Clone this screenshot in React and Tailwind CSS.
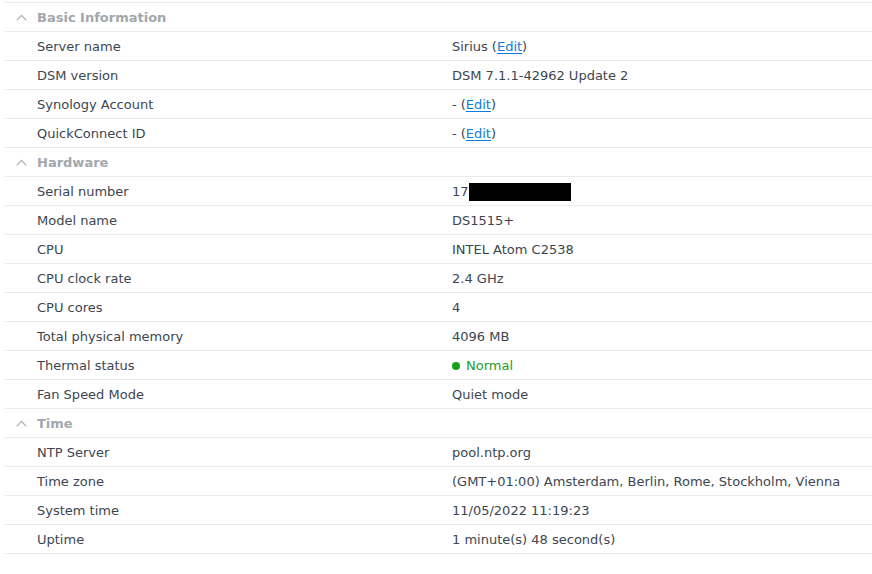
const sections = [
  {
    title: "Basic Information",
    rows: [
      { label: "Server name", value: "Sirius", edit: true },
      { label: "DSM version", value: "DSM 7.1.1-42962 Update 2" },
      { label: "Synology Account", value: "-", edit: true },
      { label: "QuickConnect ID", value: "-", edit: true },
    ],
  },
  {
    title: "Hardware",
    rows: [
      { label: "Serial number", value: "17", redacted: true },
      { label: "Model name", value: "DS1515+" },
      { label: "CPU", value: "INTEL Atom C2538" },
      { label: "CPU clock rate", value: "2.4 GHz" },
      { label: "CPU cores", value: "4" },
      { label: "Total physical memory", value: "4096 MB" },
      { label: "Thermal status", value: "Normal", status: true },
      { label: "Fan Speed Mode", value: "Quiet mode" },
    ],
  },
  {
    title: "Time",
    rows: [
      { label: "NTP Server", value: "pool.ntp.org" },
      { label: "Time zone", value: "(GMT+01:00) Amsterdam, Berlin, Rome, Stockholm, Vienna" },
      { label: "System time", value: "11/05/2022 11:19:23" },
      { label: "Uptime", value: "1 minute(s) 48 second(s)" },
    ],
  },
];

function Value({ row }) {
  if (row.status) {
    return (
      <span className="flex items-center gap-[6px] text-[#1ba01b]">
        <span className="w-[8px] h-[8px] rounded-full bg-[#16a016]" />
        {row.value}
      </span>
    );
  }
  return (
    <span className="flex items-center">
      {row.value}
      {row.redacted && <span className="inline-block w-[102px] h-[18px] bg-black" />}
      {row.edit && (
        <span className="ml-[4px]">
          (<a className="text-[#0b7de0] underline underline-offset-2 cursor-pointer">Edit</a>)
        </span>
      )}
    </span>
  );
}

export default function App() {
  return (
    <div
      className="w-[872px] h-[574px] bg-white pt-[2px] pl-[5px] text-[13px] text-[#3c4651]"
      style={{ fontFamily: '"DejaVu Sans", Verdana, sans-serif' }}
    >
      <div className="border-t border-[#e6ebf0]">
        {sections.map((s) => (
          <div key={s.title}>
            <div className="h-[29px] pt-[1px] flex items-center border-b border-[#e6ebf0] text-[#a2a7ad] font-bold">
              <svg width="11" height="7" viewBox="0 0 11 7" className="ml-[11px] mr-[10px]" fill="none">
                <polyline points="0.7,6.3 5.5,1.3 10.3,6.3" stroke="#a9adb2" strokeWidth="1.2" />
              </svg>
              {s.title}
            </div>
            {s.rows.map((r) => (
              <div key={r.label} className="h-[29px] pt-[1px] flex items-center border-b border-[#e6ebf0]">
                <div className="w-[447px] pl-[32px] shrink-0">{r.label}</div>
                <Value row={r} />
              </div>
            ))}
          </div>
        ))}
      </div>
    </div>
  );
}
